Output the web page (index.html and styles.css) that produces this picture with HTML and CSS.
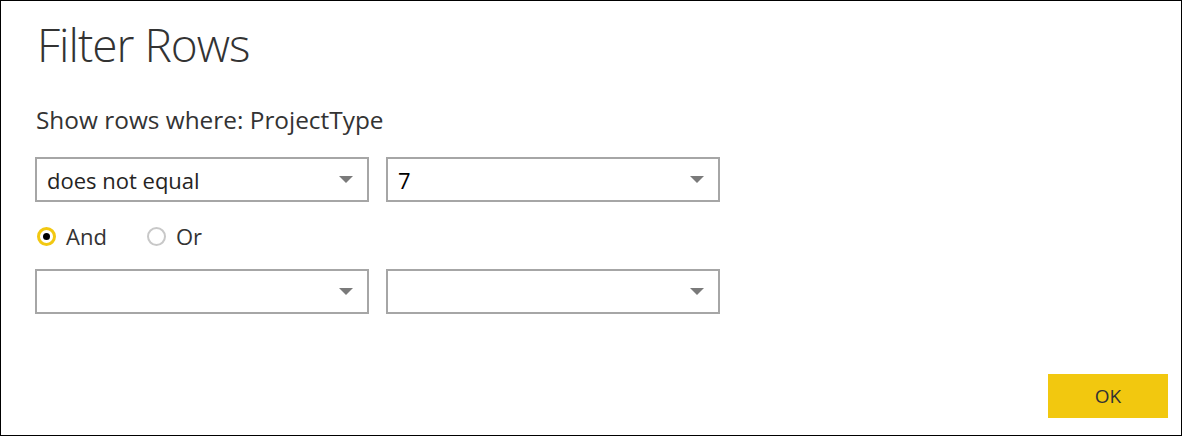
FILE: index.html
```html
<!DOCTYPE html>
<html>
<head>
<meta charset="utf-8">
<link rel="stylesheet" href="styles.css">
</head>
<body>
<div class="dialog">
  <h1 class="title">Filter Rows</h1>
  <p class="subtitle">Show rows where: ProjectType</p>
  <div class="row first">
    <div class="select"><span class="value">does not equal</span><span class="caret"></span></div>
    <div class="select"><span class="value num">7</span><span class="caret"></span></div>
  </div>
  <div class="radios">
    <label class="radio"><span class="dot checked"></span><span>And</span></label>
    <label class="radio"><span class="dot"></span><span>Or</span></label>
  </div>
  <div class="row second">
    <div class="select"><span class="value"></span><span class="caret"></span></div>
    <div class="select"><span class="value"></span><span class="caret"></span></div>
  </div>
  <div class="footer">
    <button class="ok">OK</button>
  </div>
</div>
</body>
</html>
```
FILE: styles.css
```css
* { box-sizing: border-box; }
html, body { margin: 0; padding: 0; background: #fff; }
body { font-family: "Open Sans", "Noto Sans", sans-serif; color: #333; }
.dialog {
  width: 1182px;
  height: 436px;
  border: 1px solid #000;
  padding: 13px 13px 17px 34px;
  display: flex;
  flex-direction: column;
}
.title {
  margin: 0 0 0 2px;
  font-weight: 300;
  font-size: 46px;
  letter-spacing: -1px;
  line-height: 60px;
  color: #333;
}
.subtitle {
  margin: 32px 0 0 1px;
  font-size: 24.4px;
  line-height: 28px;
  color: #333;
}
.row {
  display: flex;
  gap: 17px;
}
.row.first { margin-top: 23px; }
.row.second { margin-top: 14px; }
.select {
  width: 334px;
  height: 45px;
  border: 2px solid #a6a6a6;
  display: flex;
  align-items: center;
  justify-content: space-between;
  padding: 0 14px 0 10px;
}
.value { font-size: 22px; color: #252423; }
.value.num { color: #000; }
.caret {
  width: 0; height: 0;
  border-left: 7.5px solid transparent;
  border-right: 7.5px solid transparent;
  border-top: 7px solid #7a7a7a;
}
.radios {
  display: flex;
  gap: 40px;
  height: 38px;
  margin-top: 15px;
  align-items: center;
  padding-left: 2px;
}
.radio {
  display: flex;
  align-items: center;
  gap: 10px;
  font-size: 22px;
  color: #333;
}
.dot {
  width: 19px; height: 19px;
  border-radius: 50%;
  border: 2px solid #c8c8c8;
  display: flex;
  align-items: center;
  justify-content: center;
}
.dot.checked { border: 3px solid #f2c811; }
.dot.checked::after {
  content: "";
  width: 7px; height: 7px;
  border-radius: 50%;
  background: #000;
}
.footer {
  margin-top: auto;
  display: flex;
  justify-content: flex-end;
}
.ok {
  width: 120px;
  height: 44px;
  border: 0;
  background: #f2c80f;
  font-family: inherit;
  font-size: 19px;
  color: #333;
}
```
